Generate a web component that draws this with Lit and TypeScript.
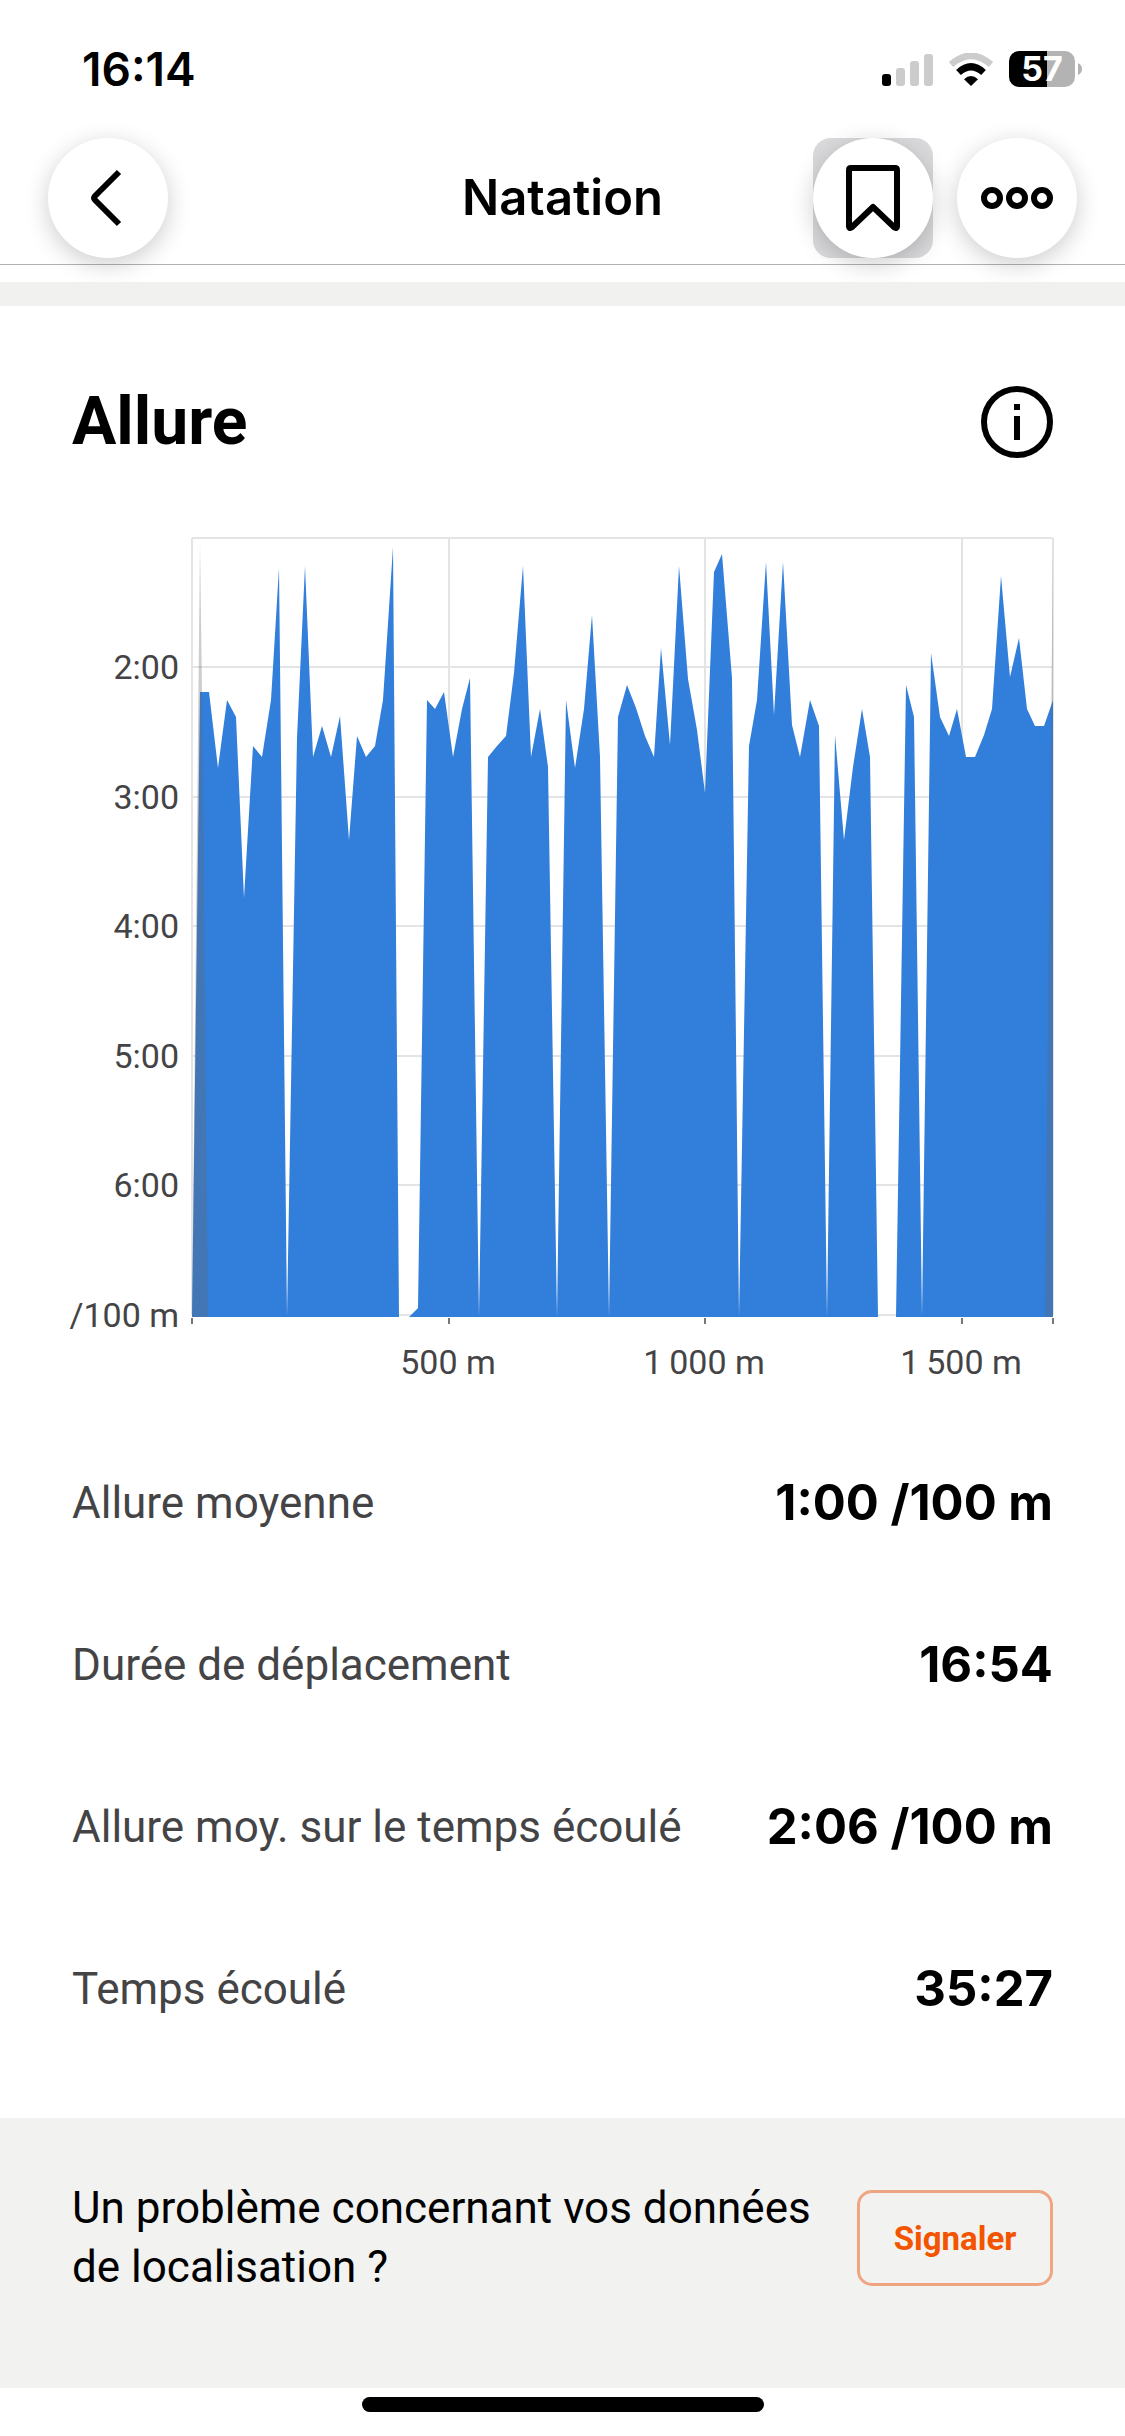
import { LitElement, html, svg, css } from "lit";
import { customElement } from "lit/decorators.js";

type Point = [number, number];

/* Plot area, in chart units: x grows with distance, y with pace (slower is lower). */
const PLOT = { left: 120, top: 8, width: 861, height: 777 };
const BASE = 779;

const PACE: Point[] = [
  [0, BASE], [8, 154], [17, 154], [26, 230], [35, 162], [44, 179], [52, 360], [61, 208], [70, 219], [79, 162],
  [87, 30], [95, BASE], [105, 200], [113, 28], [121, 219], [130, 188], [139, 219], [148, 178], [157, 302],
  [165, 198], [174, 219], [183, 208], [191, 162], [201, 9], [207, BASE], [217, BASE], [226, 770], [235, 162],
  [243, 171], [252, 154], [261, 219], [270, 171], [278, 140], [287, BASE], [296, 219], [305, 208], [314, 198],
  [322, 135], [331, 28], [339, 219], [348, 171], [356, 229], [365, BASE], [374, 162], [383, 230], [392, 171],
  [400, 77], [408, 219], [417, BASE], [426, 179], [435, 147], [444, 170], [453, 198], [462, 219], [469, 110],
  [478, 207], [487, 28], [496, 141], [505, 192], [513, 255], [522, 34], [530, 16], [540, 140], [547, BASE],
  [557, 208], [565, 162], [574, 24], [582, 177], [591, 24], [600, 187], [608, 219], [618, 162], [627, 188],
  [635, BASE], [643, 197], [652, 302], [661, 229], [670, 171], [678, 219], [686, BASE], [704, BASE], [714, 147],
  [722, 179], [730, BASE], [739, 115], [748, 179], [757, 198], [765, 171], [774, 219], [783, 219], [792, 197],
  [800, 171], [809, 38], [818, 139], [827, 100], [835, 171], [843, 188], [852, 188], [861, 162], [861, BASE],
];

const PACE_TICKS = ["2:00", "3:00", "4:00", "5:00", "6:00", "/100 m"];
const DISTANCE_TICKS = [
  { x: 0, label: "" },
  { x: 257, label: "500 m" },
  { x: 513, label: "1\u2009000 m" },
  { x: 770, label: "1\u2009500 m" },
  { x: 861, label: "" },
];

const STATS = [
  { label: "Allure moyenne", value: "1:00 /100 m" },
  { label: "Durée de déplacement", value: "16:54" },
  { label: "Allure moy. sur le temps écoulé", value: "2:06 /100 m" },
  { label: "Temps écoulé", value: "35:27" },
];

@customElement("pace-chart")
export class PaceChart extends LitElement {
  static styles = css`
    :host {
      display: block;
    }
    .chart {
      display: block;
      width: 100%;
      height: auto;
      overflow: visible;
    }
    .grid {
      stroke: #e4e4e4;
      stroke-width: 2px;
      fill: none;
    }
    .tick {
      stroke: #77777a;
      stroke-width: 2px;
    }
    .area {
      fill: #317edb;
    }
    .shade {
      fill: #676767;
      fill-opacity: 0.33;
    }
    .label {
      font-family: Roboto, "Liberation Sans", sans-serif;
      font-size: 34px;
      fill: #444446;
    }
  `;

  render() {
    const step = PLOT.height / PACE_TICKS.length;
    return html`
      <svg class="chart" viewBox="0 0 981 850" role="img" aria-label="Allure selon la distance">
        <g transform="translate(${PLOT.left} ${PLOT.top})">
          <path class="grid" d="M0 0H${PLOT.width}" />
          ${PACE_TICKS.map((_, i) => svg`<path class="grid" d="M0 ${Math.floor((i + 1) * step)}H${PLOT.width}" />`)}
          ${DISTANCE_TICKS.map((t) => svg`<path class="grid" d="M${t.x} 0V${PLOT.height}" />`)}
          <polygon class="area" points=${PACE.map((p) => p.join(",")).join(" ")} />
          <polygon class="shade" points="0,${BASE} 8,5 10,154 16,${BASE}" />
          <polygon class="shade" points="853,${BASE} 861,5 861,${BASE}" />
          ${DISTANCE_TICKS.map(
            (t) => svg`
              <path class="tick" d="M${t.x} 780V786" />
              <text class="label" text-anchor="middle" x=${t.x - 1} y="836">${t.label}</text>`
          )}
        </g>
        ${PACE_TICKS.map(
          (label, i) =>
            svg`<text class="label" text-anchor="end" x="107" y=${PLOT.top + Math.floor((i + 1) * step) + 12}>${label}</text>`
        )}
      </svg>
    `;
  }
}

@customElement("app-root")
export class AppRoot extends LitElement {
  static styles = css`
    :host {
      display: block;
      min-height: 100vh;
      background: #fff;
      color: #000;
      font-family: Roboto, "Liberation Sans", sans-serif;
    }
    * {
      box-sizing: border-box;
    }
    .screen {
      display: flex;
      flex-direction: column;
      min-height: 100vh;
    }
    button {
      padding: 0;
      border: 0;
      background: none;
      font-family: inherit;
      color: inherit;
      cursor: pointer;
    }
    svg {
      display: block;
    }

    .status {
      display: flex;
      justify-content: space-between;
      align-items: center;
      height: 138px;
      padding: 0 43px 0 82px;
      font-family: Inter, sans-serif;
    }
    .clock {
      font-size: 46px;
      font-weight: 600;
      line-height: 54px;
    }
    .indicators {
      display: flex;
      align-items: center;
      gap: 15px;
    }
    .battery {
      display: flex;
      align-items: center;
      gap: 3px;
    }
    .charge {
      width: 66px;
      height: 36px;
      border-radius: 10px;
      background: linear-gradient(90deg, #000 58%, #b3b3b3 58%);
      color: #fff;
      font-size: 34px;
      font-weight: 700;
      line-height: 36px;
      text-align: center;
    }

    .nav {
      display: grid;
      grid-template-columns: 1fr auto 1fr;
      align-items: center;
      padding: 0 48px 6px;
      border-bottom: 1px solid #b2b2b2;
    }
    .title {
      margin: 0;
      font-family: Inter, sans-serif;
      font-size: 49px;
      font-weight: 600;
      line-height: 60px;
    }
    .actions {
      display: flex;
      justify-content: flex-end;
      gap: 24px;
    }
    .round {
      display: grid;
      place-items: center;
      width: 120px;
      height: 120px;
      border-radius: 50%;
      background: #fff;
      box-shadow: 0 6px 24px rgba(0, 0, 0, 0.2);
    }
    .saved {
      border-radius: 18px;
      background: #dadadc;
    }
    .divider {
      height: 24px;
      margin-top: 17px;
      background: #f1f1ef;
    }

    .pace {
      padding: 80px 72px 0;
    }
    .heading {
      display: flex;
      justify-content: space-between;
      align-items: center;
      margin-bottom: 72px;
    }
    .name {
      margin: 0;
      font-size: 66px;
      font-weight: 700;
      line-height: 72px;
    }
    .stats {
      margin: 42px 0 0;
    }
    .row {
      display: flex;
      justify-content: space-between;
      align-items: center;
      min-height: 162px;
    }
    .key {
      color: #444446;
      font-size: 44px;
      line-height: 60px;
    }
    .value {
      margin: 0;
      font-family: Inter, sans-serif;
      font-size: 49px;
      font-weight: 700;
      line-height: 60px;
    }

    .report {
      display: flex;
      justify-content: space-between;
      align-items: center;
      gap: 24px;
      margin-top: 48px;
      padding: 61px 72px 91px;
      background: #f2f2f0;
    }
    .question {
      margin: 0;
      font-size: 44px;
      line-height: 59px;
    }
    .send {
      flex: none;
      width: 196px;
      height: 96px;
      border: 3px solid #f0a582;
      border-radius: 15px;
      color: #f35400;
      font-size: 33px;
      font-weight: 700;
    }
    .home {
      width: 402px;
      height: 15px;
      margin: 9px auto 24px;
      border-radius: 8px;
      background: #000;
    }
  `;

  render() {
    return html`
      <div class="screen">
        <div class="status">
          <span class="clock">16:14</span>
          <div class="indicators">
            <svg width="51" height="33" viewBox="0 0 51 33" aria-hidden="true">
              <rect y="21" width="9" height="12" rx="3" />
              <g fill="#cccccc">
                <rect x="14" y="15" width="9" height="18" rx="3" />
                <rect x="28" y="8" width="9" height="25" rx="3" />
                <rect x="42" y="1" width="9" height="32" rx="3" />
              </g>
            </svg>
            <svg width="46" height="33" viewBox="0 0 46 33" aria-hidden="true">
              <path d="M3 11.500Q23-6 43 11.500" fill="none" stroke="#cccccc" stroke-width="6.500" />
              <path d="M10.500 19.500Q23 8 35.500 19.500" fill="none" stroke="#000" stroke-width="7" />
              <path d="M16 26.200Q23 19.800 30 26.200L23 33Z" />
            </svg>
            <div class="battery">
              <div class="charge">57</div>
              <svg width="4" height="12" viewBox="0 0 4 12" aria-hidden="true">
                <path d="M0 0Q4 2 4 6T0 12Z" fill="#b3b3b3" />
              </svg>
            </div>
          </div>
        </div>

        <header class="nav">
          <button class="round" aria-label="Retour">
            <svg width="60" height="60" viewBox="0 0 60 60" fill="none" stroke="#000" stroke-width="6">
              <path d="M41 4L17 28Q15 30 17 32L41 56" />
            </svg>
          </button>
          <h1 class="title">Natation</h1>
          <div class="actions">
            <button class="saved" aria-label="Enregistrer">
              <span class="round">
                <svg width="54" height="66" viewBox="0 0 54 66" fill="none" stroke="#000" stroke-width="6">
                  <path
                    stroke-linejoin="round"
                    d="M5 3H49Q51 3 51 5V61.500Q51 64 48.500 62.500L27 42L5.500 62.500Q3 64 3 61.500V5Q3 3 5 3Z"
                  />
                </svg>
              </span>
            </button>
            <button class="round" aria-label="Plus d’options">
              <svg width="72" height="22" viewBox="0 0 72 22" fill="none" stroke="#000" stroke-width="6">
                <circle cx="11" cy="11" r="8" />
                <circle cx="36" cy="11" r="8" />
                <circle cx="61" cy="11" r="8" />
              </svg>
            </button>
          </div>
        </header>
        <div class="divider"></div>

        <section class="pace">
          <div class="heading">
            <h2 class="name">Allure</h2>
            <button aria-label="Informations sur l’allure">
              <svg width="72" height="72" viewBox="0 0 72 72">
                <circle cx="36" cy="36" r="33" fill="none" stroke="#000" stroke-width="6" />
                <path d="M33 18h6v6h-6zM33 30h6v24h-6z" />
              </svg>
            </button>
          </div>
          <pace-chart></pace-chart>
          <dl class="stats">
            ${STATS.map(
              (s) => html`
                <div class="row">
                  <dt class="key">${s.label}</dt>
                  <dd class="value">${s.value}</dd>
                </div>
              `
            )}
          </dl>
        </section>

        <footer class="report">
          <p class="question">Un problème concernant vos données de localisation ?</p>
          <button class="send">Signaler</button>
        </footer>
        <div class="home"></div>
      </div>
    `;
  }
}
